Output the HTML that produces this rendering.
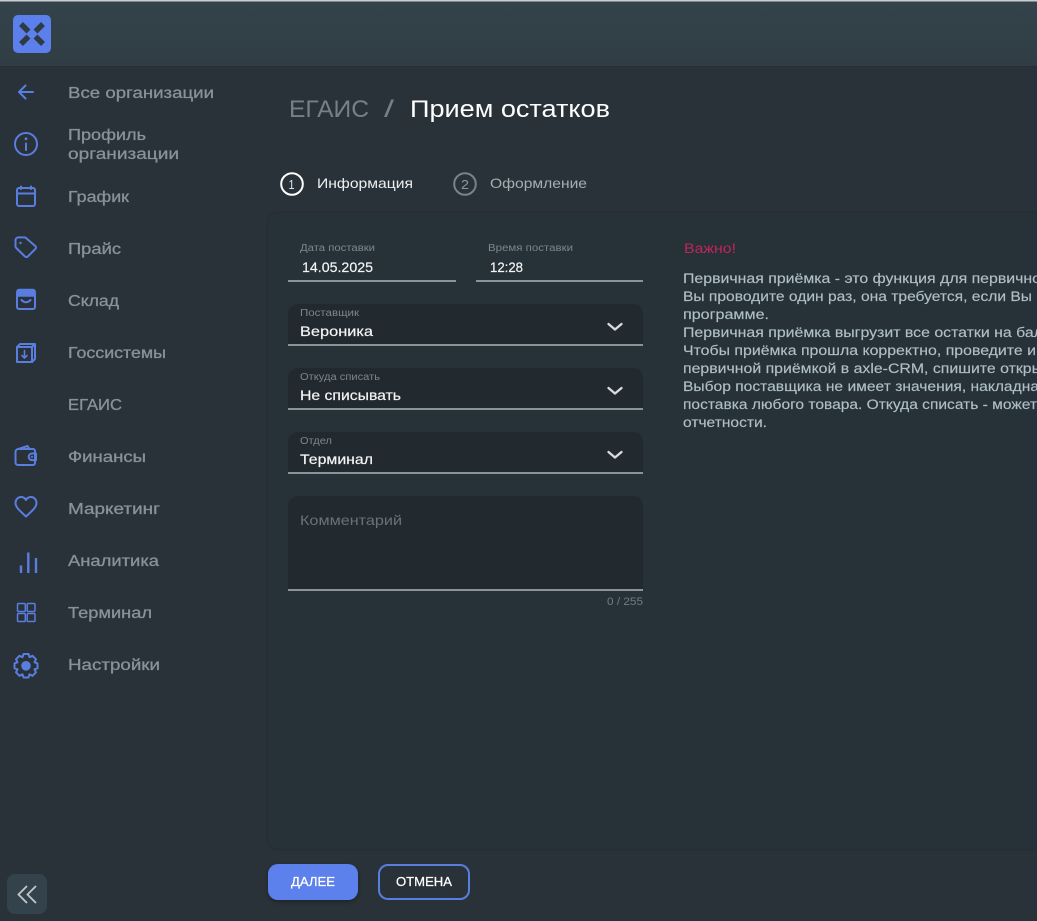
<!DOCTYPE html>
<html lang="ru"><head><meta charset="utf-8"><title>ЕГАИС</title>
<style>
html,body{margin:0;padding:0;background:#293238;width:1037px;height:921px;overflow:hidden}
svg{display:block}
text{font-family:"Liberation Sans","DejaVu Sans",sans-serif}
.n{font-size:16px;fill:#87929a;stroke:#87929a;stroke-width:.3}
.v{font-size:14px;fill:#f2f4f5;stroke:#f2f4f5;stroke-width:.2}
.l{font-size:10px;fill:#7c878d}
.p{font-size:13.5px;fill:#b0bfc6;stroke:#b0bfc6;stroke-width:.15}
.i{fill:none;stroke:#5a7de0;stroke-width:2;stroke-linecap:round;stroke-linejoin:round}
.c{fill:none;stroke:#d5dadc;stroke-width:2.4;stroke-linecap:round;stroke-linejoin:round}
</style></head><body>
<svg width="1037" height="921" viewBox="0 0 1037 921" xmlns="http://www.w3.org/2000/svg">
<defs>
<linearGradient id="h" x1="0" y1="0" x2="0" y2="1"><stop offset="0" stop-color="#34434b"/><stop offset="1" stop-color="#303d44"/></linearGradient>
<filter id="s" x="-20%" y="-20%" width="140%" height="150%"><feDropShadow dx="0" dy="2" stdDeviation="2.5" flood-color="#000" flood-opacity=".3"/></filter>
<filter id="ps" x="-5%" y="-5%" width="110%" height="110%"><feDropShadow dx="0" dy="0" stdDeviation="1.5" flood-color="#000" flood-opacity=".22"/></filter>
</defs>
<rect width="1037" height="921" fill="#293238"/>
<!-- header -->
<rect y="0" width="1037" height="67" fill="url(#h)"/>
<rect y="66" width="1037" height="1" fill="#262e34"/>
<rect y="0" width="1037" height="1.5" fill="#c9ced1"/>
<rect x="13" y="15" width="38" height="38" rx="5" fill="#5b80ec"/>
<path d="M21 24L28.500 31.500M43 24L35.500 31.500M21 44L28.500 36.500M43 44L35.500 36.500" fill="none" stroke="#2f3b43" stroke-width="5.500" stroke-linecap="butt"/>
<!-- sidebar icons -->
<path class="i" d="M33 92H19M25.500 85.500L19 92L25.500 98.500"/>
<circle class="i" cx="26" cy="144" r="11"/>
<path class="i" d="M26 143.500V150"/><circle cx="26" cy="138.800" r="1.400" fill="#5a7de0"/>
<rect class="i" x="17" y="188" width="18" height="18" rx="2"/><path class="i" d="M17 193.500H35M21 186.500V189M31 186.500V189"/>
<path class="i" d="M15.500 241V246.500a2 2 0 0 0 .6 1.400L25 256.500a2 2 0 0 0 2.800 0L35.500 248.800a1.800 1.800 0 0 0 0-2.500L26 238a2 2 0 0 0-1.400-.6H18.500a3 3 0 0 0-3 3.600z"/><circle cx="20.500" cy="243" r="1.200" fill="#5a7de0"/>
<rect class="i" x="17" y="291" width="18" height="18" rx="2"/><path d="M17 296V291.500a2 2 0 0 1 2-2h14a2 2 0 0 1 2 2V296z" fill="#5a7de0" stroke="#5a7de0" stroke-width="1.500"/><path class="i" d="M21.500 300Q26 304.500 30.500 300"/>
<rect class="i" x="17" y="347" width="15" height="15"/><path class="i" d="M17 347L20 344H35V359L32 362M32 347L35 344"/><path class="i" d="M24.500 350.500V358M22 355.500L24.500 358L27 355.500" style="stroke-width:1.600"/>
<path class="i" d="M19 449H33a2 2 0 0 1 2 2V463a2 2 0 0 1-2 2H18a2.500 2.500 0 0 1-2.500-2.500V452a3 3 0 0 1 3-3zM18.500 449L27.500 446L29.500 449"/><path class="i" d="M36 453.500H32a3.300 3.300 0 0 0 0 6.600h4z" fill="#293238"/><circle cx="32" cy="456.800" r="1.100" fill="#5a7de0"/>
<path class="i" d="M26 516.500C22 512.500 15.500 508 15.500 503C15.500 499.500 18 497 21 497C23.200 497 25 498 26 500C27 498 28.800 497 31 497C34 497 36.500 499.500 36.500 503C36.500 508 30 512.500 26 516.500Z"/>
<path d="M21 565.500V573M28.300 552.500V573M36 558V573" fill="none" stroke="#5a7de0" stroke-width="2.400"/>
<g class="i" style="stroke-width:1.500"><rect x="17.500" y="603.500" width="7.800" height="8" rx="1"/><rect x="27.200" y="603.500" width="7.800" height="8" rx="1"/><rect x="17.500" y="613.500" width="7.800" height="8" rx="1"/><rect x="27.200" y="613.500" width="7.800" height="8" rx="1"/></g>
<path class="i" d="M23.500 654H28.500L29.500 657.200L32.500 655.800L36 659.300L34.500 662.300L37.500 663.300V668.300L34.500 669.300L36 672.300L32.500 675.800L29.500 674.300L28.500 677.500H23.500L22.500 674.300L19.500 675.800L16 672.300L17.500 669.300L14.500 668.300V663.300L17.500 662.300L16 659.300L19.500 655.800L22.500 657.200z"/>
<circle cx="26" cy="665.800" r="4.800" fill="#5a7de0"/>
<!-- sidebar text -->
<g class="n">
<text x="68" y="98" textLength="146" lengthAdjust="spacingAndGlyphs">Все организации</text>
<text x="68" y="140" textLength="78" lengthAdjust="spacingAndGlyphs">Профиль</text>
<text x="68" y="159" textLength="111" lengthAdjust="spacingAndGlyphs">организации</text>
<text x="68" y="202" textLength="61" lengthAdjust="spacingAndGlyphs">График</text>
<text x="68" y="254" textLength="53" lengthAdjust="spacingAndGlyphs">Прайс</text>
<text x="68" y="306" textLength="51" lengthAdjust="spacingAndGlyphs">Склад</text>
<text x="68" y="358" textLength="98" lengthAdjust="spacingAndGlyphs">Госсистемы</text>
<text x="68" y="410" textLength="54" lengthAdjust="spacingAndGlyphs">ЕГАИС</text>
<text x="68" y="462" textLength="78" lengthAdjust="spacingAndGlyphs">Финансы</text>
<text x="68" y="514" textLength="92" lengthAdjust="spacingAndGlyphs">Маркетинг</text>
<text x="68" y="566" textLength="91" lengthAdjust="spacingAndGlyphs">Аналитика</text>
<text x="68" y="618" textLength="84" lengthAdjust="spacingAndGlyphs">Терминал</text>
<text x="68" y="670" textLength="92" lengthAdjust="spacingAndGlyphs">Настройки</text>
</g>
<!-- collapse -->
<rect x="7" y="874" width="40" height="40" rx="8" fill="#34434b"/>
<path d="M27 886L18.500 894.500L27 903M36 886L27.500 894.500L36 903" fill="none" stroke="#c0c8cc" stroke-width="1.800"/>
<!-- title -->
<text x="289" y="117" font-size="24" fill="#74818a" textLength="80" lengthAdjust="spacingAndGlyphs">ЕГАИС</text>
<text x="384" y="117" font-size="24" fill="#74818a" textLength="10" lengthAdjust="spacingAndGlyphs">/</text>
<text x="410" y="117" font-size="24" fill="#fff" textLength="200" lengthAdjust="spacingAndGlyphs">Прием остатков</text>
<!-- stepper -->
<circle cx="292" cy="184" r="10.800" fill="none" stroke="#fff" stroke-width="2"/>
<text x="288.500" y="189" font-size="13" fill="#dfe3e5" textLength="6" lengthAdjust="spacingAndGlyphs">1</text>
<text x="317" y="188" font-size="14" fill="#eef0f1" textLength="96" lengthAdjust="spacingAndGlyphs">Информация</text>
<circle cx="465" cy="184" r="10.800" fill="none" stroke="#78848a" stroke-width="2"/>
<text x="461" y="189" font-size="13" fill="#8d989e" textLength="8" lengthAdjust="spacingAndGlyphs">2</text>
<text x="490" y="188" font-size="14" fill="#a4afb4" textLength="97" lengthAdjust="spacingAndGlyphs">Оформление</text>
<!-- panel -->
<rect x="268" y="213" width="800" height="636" rx="10" fill="#283138" filter="url(#ps)"/>
<!-- date/time -->
<text x="300" y="251" class="l" textLength="75" lengthAdjust="spacingAndGlyphs">Дата поставки</text>
<text x="302" y="272" class="v" textLength="71" lengthAdjust="spacingAndGlyphs">14.05.2025</text>
<rect x="288" y="280" width="168" height="2" fill="#8b9599"/>
<text x="488" y="251" class="l" textLength="85" lengthAdjust="spacingAndGlyphs">Время поставки</text>
<text x="490" y="272" class="v" textLength="33" lengthAdjust="spacingAndGlyphs">12:28</text>
<rect x="476" y="280" width="167" height="2" fill="#8b9599"/>
<!-- selects -->
<path d="M288 345V314a10 10 0 0 1 10-10H633a10 10 0 0 1 10 10V345z" fill="#22292f"/><rect x="288" y="344" width="355" height="2" fill="#8b9599"/>
<text x="300" y="316" class="l" textLength="59" lengthAdjust="spacingAndGlyphs">Поставщик</text>
<text x="300" y="336" class="v" textLength="73" lengthAdjust="spacingAndGlyphs">Вероника</text>
<path class="c" d="M608.500 324L615 329.500L621.500 324"/>
<path d="M288 409V378a10 10 0 0 1 10-10H633a10 10 0 0 1 10 10V409z" fill="#22292f"/><rect x="288" y="408" width="355" height="2" fill="#8b9599"/>
<text x="300" y="380" class="l" textLength="80" lengthAdjust="spacingAndGlyphs">Откуда списать</text>
<text x="300" y="400" class="v" textLength="101" lengthAdjust="spacingAndGlyphs">Не списывать</text>
<path class="c" d="M608.500 388L615 393.500L621.500 388"/>
<path d="M288 473V442a10 10 0 0 1 10-10H633a10 10 0 0 1 10 10V473z" fill="#22292f"/><rect x="288" y="472" width="355" height="2" fill="#8b9599"/>
<text x="300" y="444" class="l" textLength="32" lengthAdjust="spacingAndGlyphs">Отдел</text>
<text x="300" y="464" class="v" textLength="73" lengthAdjust="spacingAndGlyphs">Терминал</text>
<path class="c" d="M608.500 452L615 457.500L621.500 452"/>
<!-- textarea -->
<path d="M288 590V506a10 10 0 0 1 10-10H633a10 10 0 0 1 10 10V590z" fill="#22292f"/><rect x="288" y="589" width="355" height="2" fill="#8b9599"/>
<text x="300" y="525" font-size="14" fill="#67737a" textLength="102" lengthAdjust="spacingAndGlyphs">Комментарий</text>
<text x="607" y="605" font-size="11" fill="#717d83" textLength="36" lengthAdjust="spacingAndGlyphs">0 / 255</text>
<!-- notice -->
<text x="684" y="253" font-size="13.500" fill="#c2255c" textLength="52" lengthAdjust="spacingAndGlyphs">Важно!</text>
<g class="p">
<text x="683" y="283" textLength="358" lengthAdjust="spacingAndGlyphs">Первичная приёмка - это функция для первично</text>
<text x="683" y="301" textLength="349" lengthAdjust="spacingAndGlyphs">Вы проводите один раз, она требуется, если Вы</text>
<text x="683" y="319" textLength="86" lengthAdjust="spacingAndGlyphs">программе.</text>
<text x="683" y="337" textLength="360" lengthAdjust="spacingAndGlyphs">Первичная приёмка выгрузит все остатки на бал</text>
<text x="683" y="355" textLength="353" lengthAdjust="spacingAndGlyphs">Чтобы приёмка прошла корректно, проведите и</text>
<text x="683" y="373" textLength="360" lengthAdjust="spacingAndGlyphs">первичной приёмкой в axle-CRM, спишите откры</text>
<text x="683" y="391" textLength="356" lengthAdjust="spacingAndGlyphs">Выбор поставщика не имеет значения, накладна</text>
<text x="683" y="409" textLength="354" lengthAdjust="spacingAndGlyphs">поставка любого товара. Откуда списать - может</text>
<text x="683" y="427" textLength="84" lengthAdjust="spacingAndGlyphs">отчетности.</text>
</g>
<!-- buttons -->
<rect x="268" y="864" width="90" height="36" rx="10" fill="#5b80ec" filter="url(#s)"/>
<text x="291" y="886" font-size="13" fill="#fff" stroke="#fff" stroke-width=".25" textLength="44" lengthAdjust="spacingAndGlyphs">ДАЛЕЕ</text>
<rect x="379" y="865" width="90" height="34" rx="9" fill="#293238" stroke="#5a7de0" stroke-width="2"/>
<text x="396" y="886" font-size="13" fill="#fff" stroke="#fff" stroke-width=".25" textLength="56" lengthAdjust="spacingAndGlyphs">ОТМЕНА</text>
</svg>
</body></html>
